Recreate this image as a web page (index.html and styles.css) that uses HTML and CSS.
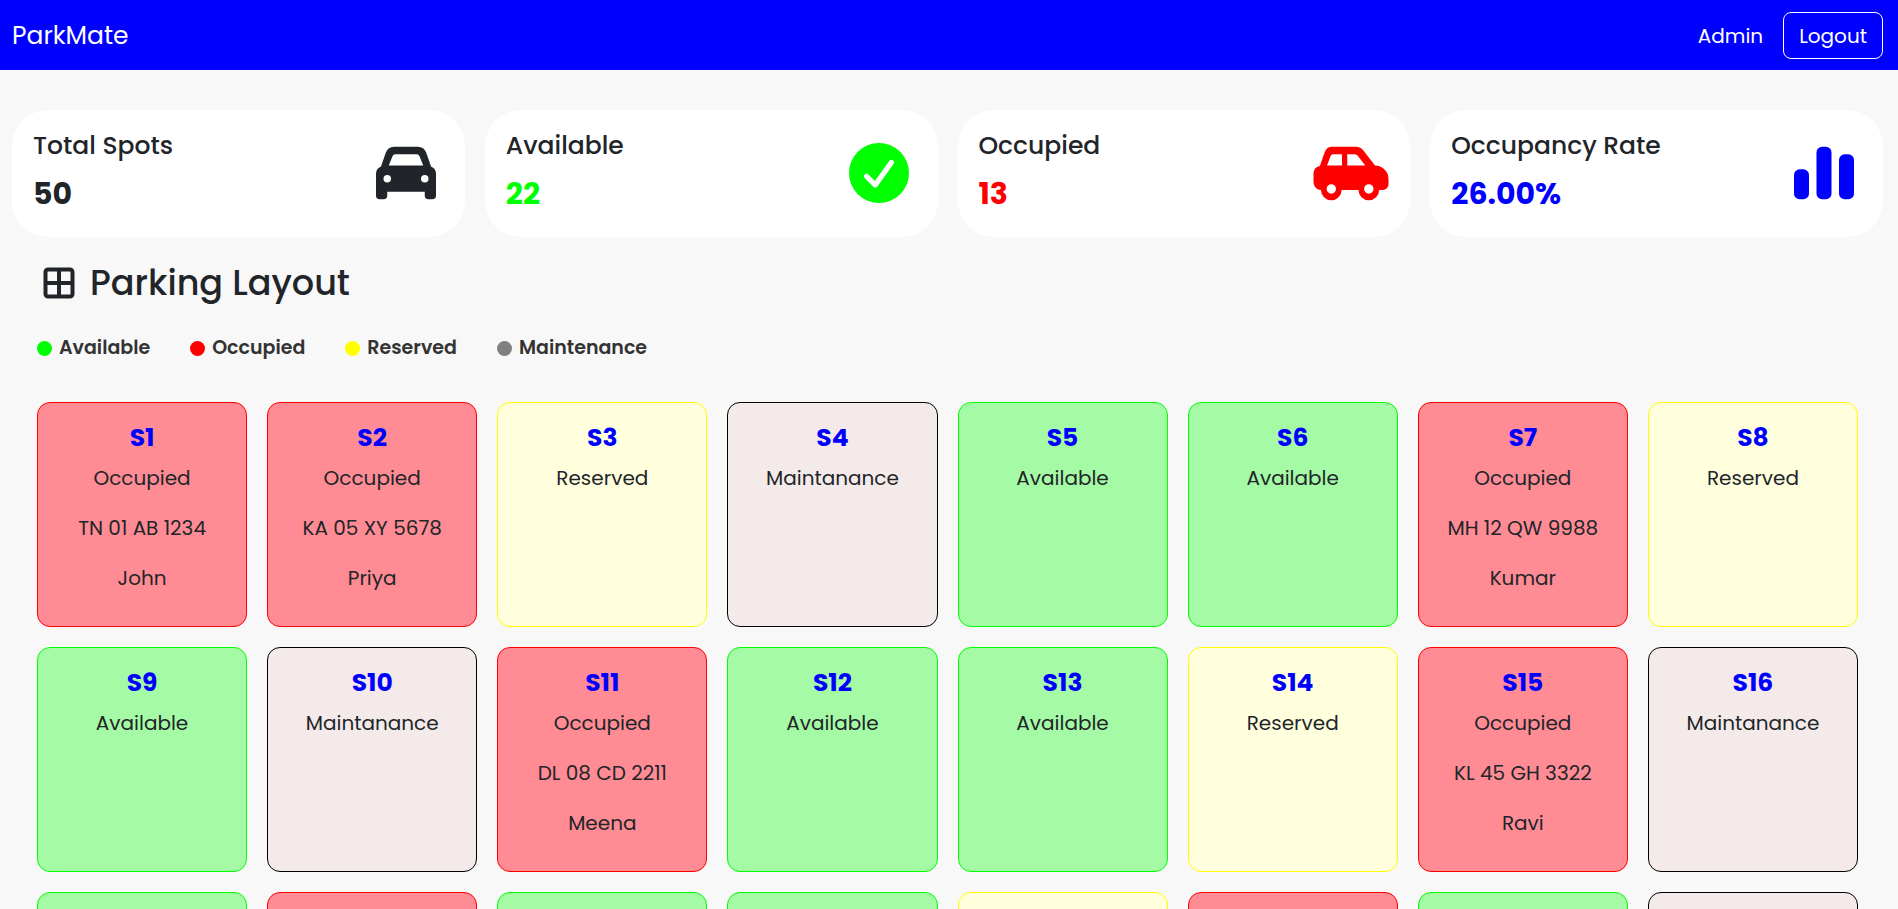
FILE: index.html
```html
<!DOCTYPE html>
<html lang="en">
<head>
<meta charset="utf-8">
<meta name="viewport" content="width=device-width, initial-scale=1">
<title>ParkMate</title>
<link rel="stylesheet" href="styles.css">
</head>
<body>
<header class="navbar">
  <a class="brand" href="#">ParkMate</a>
  <nav class="nav-actions">
    <span class="user">Admin</span>
    <button class="logout" type="button">Logout</button>
  </nav>
</header>
<main class="page">
  <section class="stats">
    <article class="stat">
      <div class="stat-text">
        <h2 class="stat-label">Total Spots</h2>
        <p class="stat-value">50</p>
      </div>
      <svg class="stat-icon" viewBox="0 0 24 24" aria-hidden="true"><path fill-rule="evenodd" d="M18.7 10.3 17.4 6.6A2.4 2.4 0 0 0 15.1 5H8.900A2.400 2.400 0 0 0 6.600 6.600L5.300 10.300A2 2 0 0 0 4 12.100V18a1 1 0 0 0 1 1h1a1 1 0 0 0 1-1v-1h10v1a1 1 0 0 0 1 1h1a1 1 0 0 0 1-1v-5.900A2 2 0 0 0 18.700 10.300zM9.200 7h5.600a.8.8 0 0 1 .8.500L16.600 10H7.400l1-2.500a.8.8 0 0 1 .8-.5zM7 12.500a1 1 0 1 1 0 2 1 1 0 0 1 0-2zm10 0a1 1 0 1 1 0 2 1 1 0 0 1 0-2z"/></svg>
    </article>
    <article class="stat stat-green">
      <div class="stat-text">
        <h2 class="stat-label">Available</h2>
        <p class="stat-value">22</p>
      </div>
      <svg class="stat-icon" viewBox="0 0 24 24" aria-hidden="true"><circle cx="12" cy="12" r="8"/><path d="M8.700 12.900 11 15.200 15.300 9.200" fill="none" stroke="#fff" stroke-width="1.400" stroke-linecap="round" stroke-linejoin="round"/></svg>
    </article>
    <article class="stat stat-red">
      <div class="stat-text">
        <h2 class="stat-label">Occupied</h2>
        <p class="stat-value">13</p>
      </div>
      <svg class="stat-icon" viewBox="0 0 24 24" aria-hidden="true"><path fill-rule="evenodd" d="M3.700 10.100 5 6.400A2.200 2.200 0 0 1 7 5h6.300a2.500 2.500 0 0 1 2 1L18.400 10A3.600 3.600 0 0 1 22 13.600V15a1.500 1.500 0 0 1-1.500 1.500h-1A2.750 2.750 0 0 1 14 16.500H9.500A2.750 2.750 0 0 1 4 16.500 2 2 0 0 1 2 14.500V12a2 2 0 0 1 1.700-1.900zM7.200 7a.6.6 0 0 0-.6.400L5.600 10H9.600V7zM11 7v3h4.800l-2-2.600A1 1 0 0 0 13 7zM6.750 15a1.250 1.250 0 1 0 0 2.500 1.250 1.250 0 0 0 0-2.500zm10 0a1.250 1.250 0 1 0 0 2.500 1.250 1.250 0 0 0 0-2.500z"/></svg>
    </article>
    <article class="stat stat-blue">
      <div class="stat-text">
        <h2 class="stat-label">Occupancy Rate</h2>
        <p class="stat-value">26.00%</p>
      </div>
      <svg class="stat-icon" viewBox="0 0 24 24" aria-hidden="true"><rect x="4" y="11" width="4" height="8" rx="1.500"/><rect x="10" y="5" width="4" height="14" rx="1.500"/><rect x="16" y="7" width="4" height="12" rx="1.500"/></svg>
    </article>
  </section>

  <section class="layout">
    <h1 class="layout-title">
      <svg class="grid-icon" viewBox="0 0 32 32" aria-hidden="true"><path d="M5 2.500h22A2.500 2.500 0 0 1 29.500 5v22a2.500 2.500 0 0 1-2.500 2.500H5A2.500 2.500 0 0 1 2.500 27V5A2.500 2.500 0 0 1 5 2.500zM16 3v26M3 16h26"/></svg>
      Parking Layout
    </h1>
    <ul class="legend">
      <li class="legend-item"><span class="dot dot-available"></span>Available</li>
      <li class="legend-item"><span class="dot dot-occupied"></span>Occupied</li>
      <li class="legend-item"><span class="dot dot-reserved"></span>Reserved</li>
      <li class="legend-item"><span class="dot dot-maintenance"></span>Maintenance</li>
    </ul>
    <div class="spots">
      <article class="spot occupied"><h3>S1</h3><p>Occupied</p><p>TN 01 AB 1234</p><p>John</p></article>
      <article class="spot occupied"><h3>S2</h3><p>Occupied</p><p>KA 05 XY 5678</p><p>Priya</p></article>
      <article class="spot reserved"><h3>S3</h3><p>Reserved</p></article>
      <article class="spot maintenance"><h3>S4</h3><p>Maintanance</p></article>
      <article class="spot available"><h3>S5</h3><p>Available</p></article>
      <article class="spot available"><h3>S6</h3><p>Available</p></article>
      <article class="spot occupied"><h3>S7</h3><p>Occupied</p><p>MH 12 QW 9988</p><p>Kumar</p></article>
      <article class="spot reserved"><h3>S8</h3><p>Reserved</p></article>
      <article class="spot available"><h3>S9</h3><p>Available</p></article>
      <article class="spot maintenance"><h3>S10</h3><p>Maintanance</p></article>
      <article class="spot occupied"><h3>S11</h3><p>Occupied</p><p>DL 08 CD 2211</p><p>Meena</p></article>
      <article class="spot available"><h3>S12</h3><p>Available</p></article>
      <article class="spot available"><h3>S13</h3><p>Available</p></article>
      <article class="spot reserved"><h3>S14</h3><p>Reserved</p></article>
      <article class="spot occupied"><h3>S15</h3><p>Occupied</p><p>KL 45 GH 3322</p><p>Ravi</p></article>
      <article class="spot maintenance"><h3>S16</h3><p>Maintanance</p></article>
      <article class="spot available"></article>
      <article class="spot occupied"></article>
      <article class="spot available"></article>
      <article class="spot available"></article>
      <article class="spot reserved"></article>
      <article class="spot occupied"></article>
      <article class="spot available"></article>
      <article class="spot maintenance"></article>
    </div>
  </section>
</main>
</body>
</html>
```
FILE: styles.css
```css
* {
  box-sizing: border-box;
}

body {
  margin: 0;
  background: #f8f8f8;
  color: #212529;
  font-family: Poppins, Inter, sans-serif;
  font-size: 20px;
  line-height: 30px;
}

h1, h2, h3, p, ul {
  margin: 0;
  padding: 0;
}

.navbar {
  display: flex;
  align-items: center;
  justify-content: space-between;
  min-height: 70px;
  padding: 12px 15px 11px 12px;
  background: #0000ff;
  color: #fff;
}

.brand {
  color: inherit;
  font-size: 25px;
  text-decoration: none;
}

.nav-actions {
  display: flex;
  align-items: center;
  gap: 20px;
}

.logout {
  padding: 8px 15px 7px;
  border: 1px solid #fff;
  border-radius: 8px;
  background: transparent;
  color: inherit;
  font: inherit;
}

.page {
  padding: 40px 15px 20px 12px;
}

.stats {
  display: grid;
  grid-template-columns: repeat(4, 1fr);
  gap: 20px;
}

.stat {
  display: flex;
  align-items: center;
  justify-content: space-between;
  min-height: 127px;
  padding: 17px 14px 18px 21px;
  border-radius: 36px;
  background: #fff;
}

.stat-text {
  padding-bottom: 5px;
}

.stat-label {
  margin-bottom: 14px;
  font-size: 25px;
  font-weight: 500;
  line-height: 32px;
}

.stat-value {
  font-size: 30px;
  font-weight: 700;
  line-height: 36px;
}

.stat-icon {
  width: 90px;
  height: 90px;
  fill: currentColor;
}

.stat-green .stat-value,
.stat-green .stat-icon {
  color: #00ff00;
}

.stat-red .stat-value,
.stat-red .stat-icon {
  color: #ff0000;
}

.stat-blue .stat-value,
.stat-blue .stat-icon {
  color: #0000ff;
}

.layout {
  padding: 25px 25px 0;
}

.layout-title {
  display: flex;
  align-items: center;
  gap: 15px;
  padding-left: 6px;
  font-size: 35px;
  font-weight: 500;
  line-height: 42px;
}

.grid-icon {
  width: 32px;
  height: 32px;
  fill: none;
  stroke: currentColor;
  stroke-width: 4;
}

.legend {
  display: flex;
  gap: 40px;
  margin: 29px 0 39px;
  color: #333;
  font-size: 19px;
  font-weight: 600;
  list-style: none;
}

.legend-item {
  display: flex;
  align-items: center;
  gap: 7px;
}

.dot {
  width: 15px;
  height: 15px;
  border-radius: 50%;
}

.dot-available { background: #00ff00; }
.dot-occupied { background: #ff0000; }
.dot-reserved { background: #ffff00; }
.dot-maintenance { background: #808080; }

.spots {
  display: grid;
  grid-template-columns: repeat(8, 1fr);
  gap: 20px;
}

.spot {
  min-height: 225px;
  padding: 20px 10px 12px;
  border: 1px solid;
  border-radius: 13px;
  text-align: center;
}

.spot h3 {
  margin-bottom: 10px;
  color: #0000ff;
  font-size: 25px;
  font-weight: 700;
  line-height: 30px;
}

.spot p {
  margin-bottom: 20px;
}

.occupied {
  border-color: #ff0000;
  background: #ff8b94;
}

.available {
  border-color: #00ff00;
  background: #a5fba5;
}

.reserved {
  border-color: #ffff00;
  background: #ffffde;
}

.maintenance {
  border-color: #000;
  background: #f4eaea;
}
```
